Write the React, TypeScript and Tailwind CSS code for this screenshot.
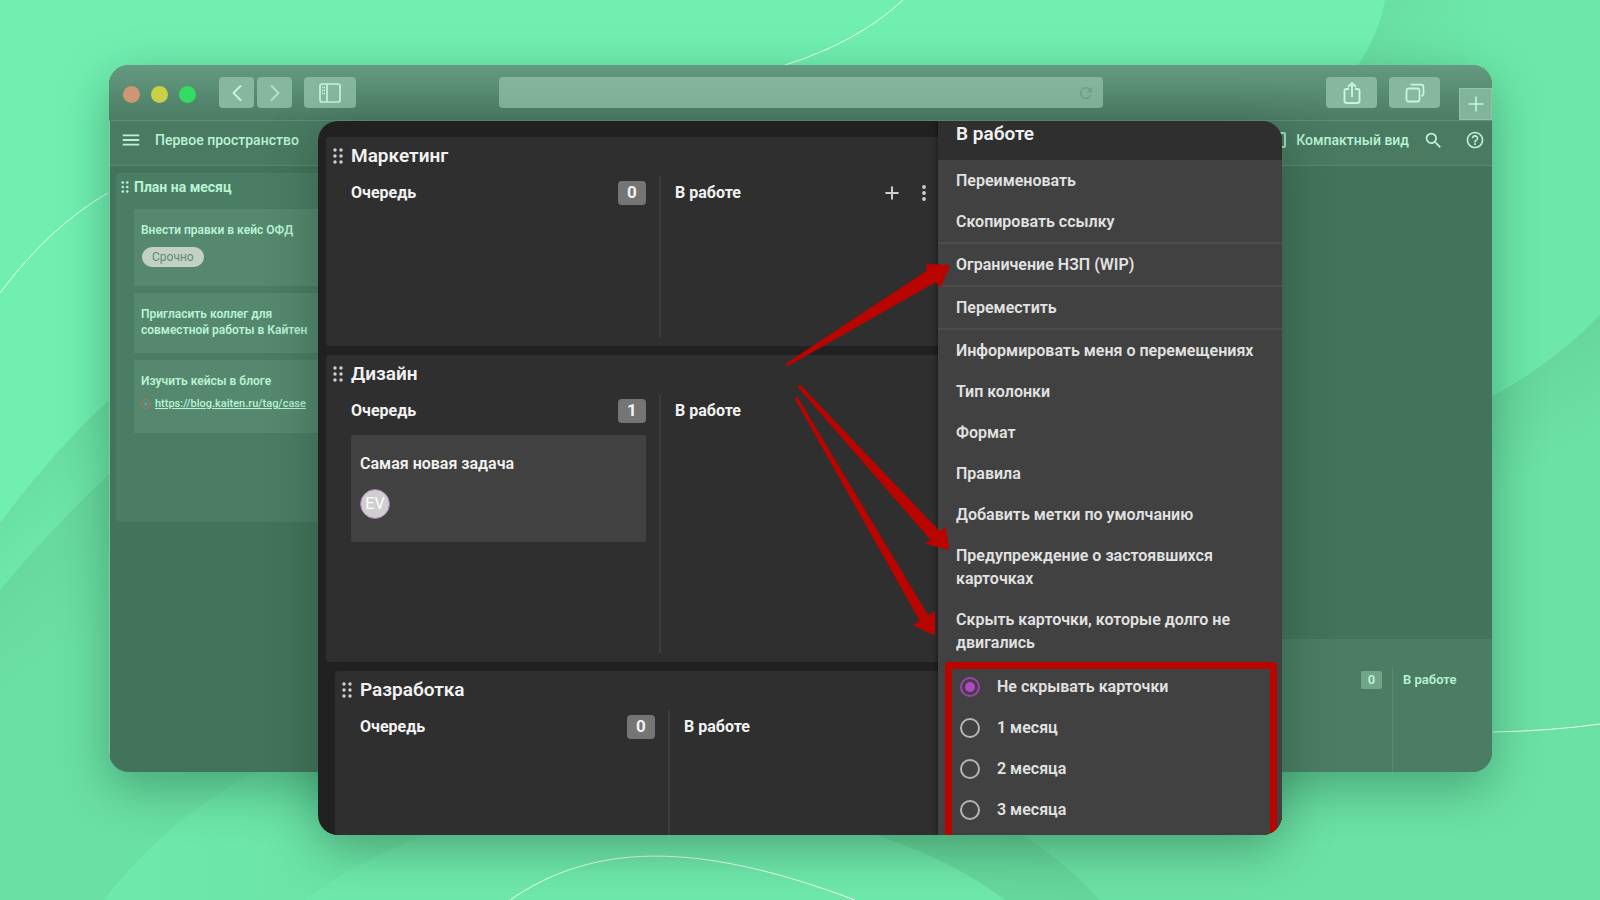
import { ChevronLeft, ChevronRight, Plus } from "lucide-react";
import { MdHelpOutline, MdMenu, MdRefresh, MdSearch } from "react-icons/md";
import { clsx } from "clsx";

interface Lane {
  title: string;
  count: number;
  card?: string;
  actions?: boolean;
  className: string;
}

const lanes: Lane[] = [
  { title: "Маркетинг", count: 0, actions: true, className: "h-[209px] pb-[9px]" },
  { title: "Дизайн", count: 1, card: "Самая новая задача", className: "h-[307px] pb-[9px]" },
  { title: "Разработка", count: 0, className: "ml-[9px] flex-1" },
];

const menuGroups = [
  ["Переименовать", "Скопировать ссылку"],
  ["Ограничение НЗП (WIP)"],
  ["Переместить"],
  [
    "Информировать меня о перемещениях",
    "Тип колонки",
    "Формат",
    "Правила",
    "Добавить метки по умолчанию",
    "Предупреждение о застоявшихся карточках",
    "Скрыть карточки, которые долго не двигались",
  ],
];

const periods = ["Не скрывать карточки", "1 месяц", "2 месяца", "3 месяца"];

function DragDots({ className }: { className?: string }) {
  return (
    <svg viewBox="0 0 10 16" fill="currentColor" className={className} aria-hidden="true">
      {[2, 8].map((cx) => [2, 8, 14].map((cy) => <circle key={`${cx}-${cy}`} cx={cx} cy={cy} r="1.7" />))}
    </svg>
  );
}

function Backdrop() {
  return (
    <svg
      viewBox="0 0 1600 900"
      preserveAspectRatio="none"
      className="absolute inset-0 -z-10 h-full w-full"
      aria-hidden="true"
    >
      <defs>
        <linearGradient id="corner" gradientUnits="userSpaceOnUse" x1="1365" y1="30" x2="1480" y2="70">
          <stop offset="0" stopColor="#69dea3" />
          <stop offset="1" stopColor="#6de8aa" />
        </linearGradient>
        <linearGradient id="band" gradientUnits="userSpaceOnUse" x1="50" y1="450" x2="95" y2="500">
          <stop offset="0" stopColor="#69dda2" />
          <stop offset="1" stopColor="#6de7a9" />
        </linearGradient>
        <linearGradient id="field" gradientUnits="userSpaceOnUse" x1="50" y1="528" x2="120" y2="610">
          <stop offset="0" stopColor="#67d89e" />
          <stop offset="1" stopColor="#6be0a4" />
        </linearGradient>
        <linearGradient id="slope" gradientUnits="userSpaceOnUse" x1="1545" y1="360" x2="1590" y2="440">
          <stop offset="0" stopColor="#67d79d" />
          <stop offset="1" stopColor="#6ce1a5" />
        </linearGradient>
        <linearGradient id="hill" x1="0" y1="0" x2="1" y2="0">
          <stop offset="0" stopColor="#6fe9ac" />
          <stop offset="0.2" stopColor="#6ce4a7" />
          <stop offset="1" stopColor="#66d69c" />
        </linearGradient>
      </defs>
      <rect width="1600" height="900" fill="#71efb1" />
      <path d="M1385 0Q1378 36 1358 65L1300 300L1450 450L1600 400V0Z" fill="url(#corner)" />
      <path d="M0 523Q50 455 108 401L500 300V900H0Z" fill="url(#band)" />
      <path d="M0 590Q50 530 108 475L500 400V900H0Z" fill="url(#field)" />
      <path d="M400 600H1300L1493 396Q1555 362 1600 315V900H400Z" fill="url(#slope)" />
      <path d="M104 900Q165 820 255 772C450 640 850 660 1022 835Q1065 862 1100 900Z" fill="url(#hill)" />
      <path d="M305 900Q355 862 425 835C560 780 760 790 885 838Q955 862 1005 900Z" fill="#6fe8ab" />
      <g fill="none" stroke="#eafff4">
        <path d="M0 293Q50 226 108 193" />
        <path d="M785 65Q858 42 903 0" />
        <path d="M510 900C590 845 690 838 855 900" />
        <path d="M1493 732Q1550 731 1600 724" />
      </g>
    </svg>
  );
}

function BrowserToolbar() {
  const button = "flex h-[31px] items-center justify-center rounded bg-[#87b79f] text-[#c2f8dc]";

  return (
    <div className="grid h-[56px] grid-cols-[1fr_604px_1fr] items-center border-b border-[#5b9176] bg-linear-to-b from-[#649a81] to-[#4c7c64]">
      <div className="flex items-center pl-[14px]">
        <div className="mr-[23px] flex gap-[11px] pt-1">
          <span className="size-[17px] rounded-full bg-[#cf9674]" />
          <span className="size-[17px] rounded-full bg-[#c9d047]" />
          <span className="size-[17px] rounded-full bg-[#33dc60]" />
        </div>
        <button aria-label="Назад" className={clsx(button, "mr-[3px] w-[35px]")}>
          <ChevronLeft className="size-7" strokeWidth={1.7} />
        </button>
        <button aria-label="Вперёд" className={clsx(button, "mr-3 w-[35px]")}>
          <ChevronRight className="size-7 opacity-70" strokeWidth={1.7} />
        </button>
        <button aria-label="Боковая панель" className={clsx(button, "w-[52px]")}>
          <svg viewBox="0 0 22 20" className="h-5 w-[22px]" fill="none" stroke="currentColor" strokeWidth="1.7">
            <rect x="1" y="1" width="20" height="18" rx="2" />
            <path d="M8 1v18" />
            <path d="M3 4.500h3M3 7.500h3M3 10.500h3" strokeDasharray="1.200 .6" />
          </svg>
        </button>
      </div>
      <div className="relative">
        <input aria-label="Адрес" className="block h-[31px] w-full rounded bg-[#85b59d] px-3 text-sm text-white outline-none" />
        <MdRefresh className="absolute top-[7px] right-2 size-[18px] text-[#6fa388]" />
      </div>
      <div className="flex items-center justify-end self-stretch">
        <button aria-label="Поделиться" className={clsx(button, "mr-3 w-[51px]")}>
          <svg viewBox="0 0 18 24" className="h-6 w-[18px]" fill="none" stroke="currentColor" strokeWidth="1.9">
            <path d="M6 8H3.500Q1.500 8 1.500 10v10q0 2 2 2h11q2 0 2-2V10q0-2-2-2H12M9 16V2M5 6l4-4 4 4" />
          </svg>
        </button>
        <button aria-label="Вкладки" className={clsx(button, "mr-[19px] w-[51px]")}>
          <svg viewBox="0 0 20 20" className="size-5" fill="none" stroke="currentColor" strokeWidth="1.8">
            <rect x="1.500" y="5.500" width="13" height="13" rx="2" />
            <path d="M5.500 1.700h10.500q2.500 0 2.500 2.500V10q0 2.500-2 3" />
          </svg>
        </button>
        <button
          aria-label="Новая вкладка"
          className="flex h-8 w-[33px] items-center justify-center self-end border border-[#8fc4a9] bg-[#82b39b] text-[#c2f8dc]"
        >
          <Plus className="size-6" strokeWidth={1.5} />
        </button>
      </div>
    </div>
  );
}

function BrowserWindow() {
  const card = "bg-[#56886f] pl-[7px] pr-4 pt-[13px] text-xs leading-4 font-semibold";

  return (
    <div className="overflow-hidden rounded-[20px] bg-[#43735b] font-[Roboto,sans-serif] text-[#b9f3d5] shadow-[0_16px_50px_rgba(20,80,50,0.4)]">
      <BrowserToolbar />
      <div className="border-l border-[#7fc9a3]">
        <header className="flex h-[45px] items-center justify-between border-b border-[#558b70] bg-[#4a7a62] pr-[7px] pb-[6px] pl-[10px]">
          <div className="flex items-center">
            <button aria-label="Меню" className="mr-[13px]">
              <MdMenu className="size-[22px]" />
            </button>
            <span className="text-sm font-medium">Первое пространство</span>
          </div>
          <div className="flex items-center">
            <label className="mr-[14px] flex items-center gap-[10px] text-sm font-medium">
              <input type="checkbox" className="size-4 appearance-none rounded-xs border-2 border-[#9fdcbd]" />
              Компактный вид
            </label>
            <button aria-label="Поиск" className="mr-[21px]">
              <MdSearch className="size-[21px]" />
            </button>
            <button aria-label="Помощь">
              <MdHelpOutline className="size-5" />
            </button>
          </div>
        </header>
        <div className="flex justify-between pt-[7px]">
          <section className="ml-[6px] h-[349px] w-[240px] rounded bg-[#4b7d64] pt-[4px] pl-[5px]">
            <h2 className="flex items-center gap-[5px] text-sm leading-5 font-bold">
              <DragDots className="h-3 w-2" />
              План на месяц
            </h2>
            <div className="mt-[12px] ml-[13px] flex flex-col gap-[7px]">
              <div className={clsx(card, "h-[77px]")}>
                <p>Внести правки в кейс ОФД</p>
                <span className="mt-[9px] ml-px inline-block rounded-full bg-[#c3d0c5] px-[10px] text-xs leading-[20px] font-normal text-[#5e8c74]">
                  Срочно
                </span>
              </div>
              <div className={clsx(card, "h-[60px]")}>
                <p>
                  Пригласить коллег для
                  <br />
                  совместной работы в Кайтен
                </p>
              </div>
              <div className={clsx(card, "h-[73px]")}>
                <p>Изучить кейсы в блоге</p>
                <div className="mt-[7px] flex items-center gap-1 text-[11px] font-medium">
                  <span className="flex size-[10px] items-center justify-center rounded-full border border-[#c66a50]">
                    <span className="size-1 rounded-full bg-[#4f9fa5]" />
                  </span>
                  <a href="https://blog.kaiten.ru/tag/case" className="underline">
                    https://blog.kaiten.ru/tag/case
                  </a>
                </div>
              </div>
            </div>
          </section>
          <section className="mt-[466px] flex h-[133px] w-[260px] justify-end bg-[#4b7d64] text-[13px] font-semibold">
            <span className="mt-8 mr-[10px] h-[18px] w-[21px] rounded-xs bg-[#73a58b] text-center leading-[18px]">0</span>
            <h3 className="mt-[29px] w-[100px] border-l border-[#588b71] pt-[2px] pl-[10px] leading-5">В работе</h3>
          </section>
        </div>
      </div>
    </div>
  );
}

function LanePanel({ lane }: { lane: Lane }) {
  return (
    <section className={clsx("flex shrink-0 flex-col rounded-l bg-[#2f2f2f] pt-2 pl-[7px]", lane.className)}>
      <h2 className="flex items-center gap-2 text-[19px] leading-[22px] font-semibold">
        <DragDots className="h-4 w-[10px] text-[#cfcfcf]" />
        {lane.title}
      </h2>
      <div className="mt-[9px] ml-[18px] flex flex-1 text-base font-bold">
        <div className="w-[310px] border-r-2 border-[#3c3c3c] pr-[13px]">
          <div className="mt-[5px] flex h-6 items-center justify-between">
            <h3>Очередь</h3>
            <span className="h-6 w-7 rounded bg-[#757575] text-center text-[17px] leading-[22px]">{lane.count}</span>
          </div>
          {lane.card && (
            <article className="mt-3 h-[107px] rounded-xs bg-[#414141] px-[9px] pt-[18px] font-semibold">
              <p className="leading-[22px]">{lane.card}</p>
              <span className="mt-[14px] flex size-[30px] items-center justify-center rounded-full border border-[#a96bb5] bg-[#cfcfcf] font-normal text-white">
                EV
              </span>
            </article>
          )}
        </div>
        <div className="flex flex-1 justify-between pt-[5px] pr-[11px] pl-[14px]">
          <h3 className="leading-6">В работе</h3>
          {lane.actions && (
            <div className="flex h-6 items-center gap-[19px] text-[#cfcfcf]">
              <button aria-label="Добавить">
                <Plus className="size-5" strokeWidth={2.4} />
              </button>
              <button aria-label="Ещё">
                <svg viewBox="0 0 6 16" fill="currentColor" className="h-4 w-[6px]">
                  <circle cx="3" cy="2" r="1.9" />
                  <circle cx="3" cy="8" r="1.9" />
                  <circle cx="3" cy="14" r="1.9" />
                </svg>
              </button>
            </div>
          )}
        </div>
      </div>
    </section>
  );
}

function ColumnMenu() {
  return (
    <aside className="z-10 w-[344px] shrink-0 bg-[#414141] text-base leading-[23px] font-semibold text-[#e2e2e2] shadow-[0_0_6px_rgba(0,0,0,0.6)]">
      <h2 className="h-[39px] bg-[#2f2f2f] pt-px pl-[18px] text-[19px] leading-[23px] text-[#f2f2f2]">В работе</h2>
      {menuGroups.map((group, idx) => (
        <div key={idx} className={clsx(idx < menuGroups.length - 1 && "border-b-2 border-[#4c4c4c]")}>
          {group.map((item) => (
            <button key={item} className="block w-full px-[18px] py-[9px] text-left">
              {item}
            </button>
          ))}
        </div>
      ))}
      <fieldset className="-mt-px mr-[5px] ml-[7px] flex flex-col gap-[6px] rounded-t border-7 border-b-0 border-[#b90400] pb-[8px] pl-2">
        {periods.map((period, idx) => (
          <label key={period} className="flex h-[35px] items-center gap-[17px]">
            <input
              type="radio"
              name="period"
              defaultChecked={idx === 0}
              className="size-5 appearance-none rounded-full border-2 border-[#b5b5b5] checked:border-[#a23fb5] checked:bg-[#b048c4] checked:bg-clip-content checked:p-[3px]"
            />
            {period}
          </label>
        ))}
      </fieldset>
    </aside>
  );
}

function Arrows() {
  return (
    <svg
      width="170"
      height="380"
      viewBox="780 260 170 380"
      fill="#b90400"
      stroke="#b90400"
      strokeLinejoin="round"
      className="pointer-events-none absolute top-[139px] right-[332px] z-20"
      aria-hidden="true"
    >
      <path d="M787 364L928 271L927 265L949 266L940 286L936 281L788 365Z" strokeWidth="2" />
      <path d="M800 386L940 533L945 528L948 549L927 543L932 540L799 387Z" strokeWidth="2" />
      <path d="M797 398L928 617L934 613L934 634L915 625L921 621L796 399Z" strokeWidth="2" />
    </svg>
  );
}

export default function App() {
  return (
    <main className="relative isolate min-h-screen overflow-hidden pt-[65px] pr-[108px] pl-[109px]">
      <Backdrop />
      <BrowserWindow />
      {/* Enlarged board, floats above the browser window */}
      <div className="absolute top-[121px] left-1/2 flex w-[60.25%] -translate-x-1/2 overflow-hidden rounded-[20px] bg-[#212121] font-[Roboto,sans-serif] text-[#f2f2f2] shadow-[0_12px_50px_rgba(20,60,40,0.4)]">
        <div className="flex min-w-0 flex-1 flex-col gap-[9px] pt-4 pl-2">
          {lanes.map((lane) => (
            <LanePanel key={lane.title} lane={lane} />
          ))}
        </div>
        <ColumnMenu />
        <Arrows />
      </div>
    </main>
  );
}
